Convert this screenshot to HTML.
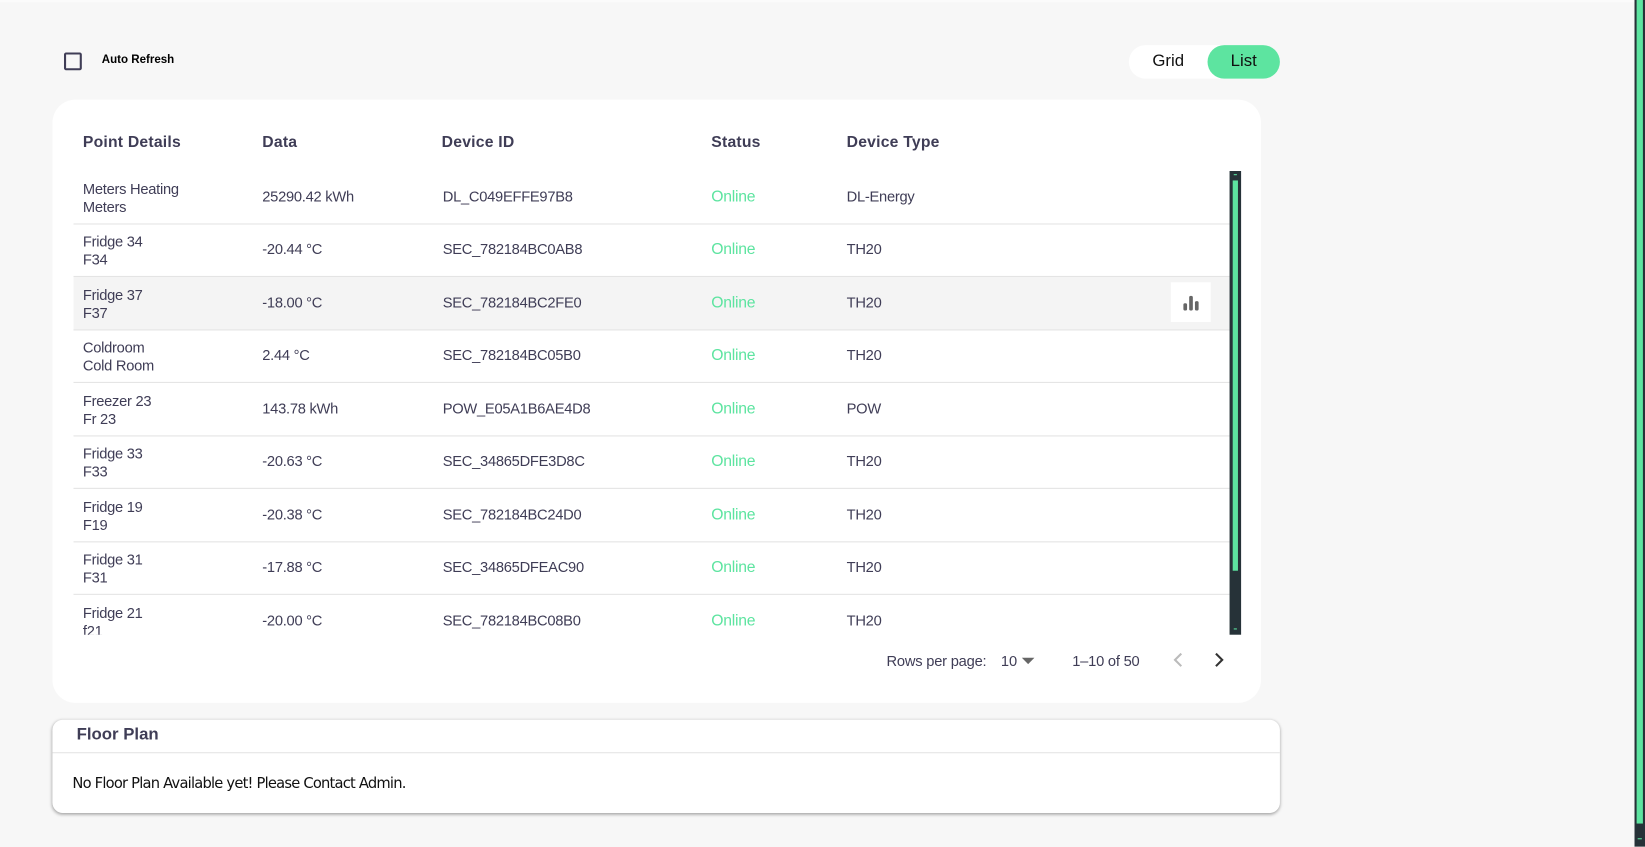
<!DOCTYPE html>
<html><head><meta charset="utf-8"><style>
*{box-sizing:border-box;margin:0;padding:0}
html,body{width:1645px;height:846px;overflow:hidden;background:#f7f7f7}
#w{position:absolute;left:0;top:0;width:1568px;height:807px;transform:scale(1.04911);transform-origin:0 0;font-family:"Liberation Sans",sans-serif;color:#3f3d56}
.abs{position:absolute}
.cb{left:61px;top:50px;width:17px;height:17px;border:2px solid #3f3d56;border-radius:2px}
.ar{left:97px;top:51px;font-size:11px;font-weight:bold;color:#000}
.tog{left:1076px;top:43px;width:144px;height:32px;background:#fff;border-radius:16px}
.tog .g{position:absolute;left:0;width:75px;top:0;height:32px;line-height:32px;text-align:center;font-size:16px;color:#111}
.tog .l{position:absolute;left:75px;width:69px;top:0;height:32px;line-height:32px;text-align:center;font-size:16px;color:#111;background:#5de4a0;border-radius:16px}
.card{left:50px;top:95px;width:1152px;height:575px;background:#fff;border-radius:22px}
.th{top:127px;font-size:15px;font-weight:bold;color:#3f3d56;letter-spacing:0.2px}
.row{position:absolute;left:70px;width:1102px;height:51px;border-bottom:1px solid #e3e3e3;font-size:14px;color:#3f3d56;letter-spacing:-0.25px}
.row div{position:absolute}
.c1{left:9px;top:9px;line-height:17px}
.c2{left:180px;top:16px}
.c3{left:352px;top:16px}
.c4{left:608px;top:16px;color:#5de4a0;font-size:15px}
.c5{left:737px;top:16px}
.sb{left:1172px;top:163px;width:11px;height:442px;background:#263238}
.fp{left:50px;top:686px;width:1170px;height:89px;background:#fff;border-radius:10px;box-shadow:0 1px 3px rgba(0,0,0,.35)}
</style></head><body><div id="w">
<div class="abs" style="left:0;top:0;width:1568px;height:2px;background:#fbfbfb"></div>
<div class="abs cb"></div>
<div class="abs ar">Auto Refresh</div>
<div class="abs tog"><div class="g">Grid</div><div class="l">List</div></div>
<div class="abs card"></div>
<div class="abs th" style="left:79px">Point Details</div>
<div class="abs th" style="left:250px">Data</div>
<div class="abs th" style="left:421px">Device ID</div>
<div class="abs th" style="left:678px">Status</div>
<div class="abs th" style="left:807px">Device Type</div>
<div class="abs" style="left:70px;top:163px;width:1102px;height:442px;overflow:hidden">
<div class="row" style="top:0;left:0"><div class="c1">Meters Heating<br>Meters</div><div class="c2">25290.42 kWh</div><div class="c3">DL_C049EFFE97B8</div><div class="c4">Online</div><div class="c5">DL-Energy</div></div>
<div class="row" style="top:50px;left:0"><div class="c1">Fridge 34<br>F34</div><div class="c2">-20.44 °C</div><div class="c3">SEC_782184BC0AB8</div><div class="c4">Online</div><div class="c5">TH20</div></div>
<div class="row" style="top:101px;left:0;background:#f4f4f4"><div class="c1">Fridge 37<br>F37</div><div class="c2">-18.00 °C</div><div class="c3">SEC_782184BC2FE0</div><div class="c4">Online</div><div class="c5">TH20</div>
<div style="left:1046px;top:5px;width:38px;height:38px;background:#fff"><svg width="38" height="38"><g fill="#666"><rect x="12" y="20" width="3.5" height="7" rx="1.5"/><rect x="17.5" y="13" width="3.5" height="14" rx="1.5"/><rect x="23" y="18" width="3.5" height="9" rx="1.5"/></g></svg></div></div>
<div class="row" style="top:151px;left:0"><div class="c1">Coldroom<br>Cold Room</div><div class="c2">2.44 °C</div><div class="c3">SEC_782184BC05B0</div><div class="c4">Online</div><div class="c5">TH20</div></div>
<div class="row" style="top:202px;left:0"><div class="c1">Freezer 23<br>Fr 23</div><div class="c2">143.78 kWh</div><div class="c3">POW_E05A1B6AE4D8</div><div class="c4">Online</div><div class="c5">POW</div></div>
<div class="row" style="top:252px;left:0"><div class="c1">Fridge 33<br>F33</div><div class="c2">-20.63 °C</div><div class="c3">SEC_34865DFE3D8C</div><div class="c4">Online</div><div class="c5">TH20</div></div>
<div class="row" style="top:303px;left:0"><div class="c1">Fridge 19<br>F19</div><div class="c2">-20.38 °C</div><div class="c3">SEC_782184BC24D0</div><div class="c4">Online</div><div class="c5">TH20</div></div>
<div class="row" style="top:353px;left:0"><div class="c1">Fridge 31<br>F31</div><div class="c2">-17.88 °C</div><div class="c3">SEC_34865DFEAC90</div><div class="c4">Online</div><div class="c5">TH20</div></div>
<div class="row" style="top:404px;left:0"><div class="c1">Fridge 21<br>f21</div><div class="c2">-20.00 °C</div><div class="c3">SEC_782184BC08B0</div><div class="c4">Online</div><div class="c5">TH20</div></div>
</div>
<div class="abs sb"><div class="abs" style="left:3px;top:9px;width:5px;height:372px;background:#5de4a0"></div><div class="abs" style="left:4px;top:3px;width:3px;height:1px;background:#5de4a0"></div><div class="abs" style="left:4px;top:436px;width:3px;height:1px;background:#5de4a0"></div></div>
<div class="abs" style="left:845px;top:622px;font-size:14px;color:#3f3d56;letter-spacing:-0.2px">Rows per page:</div>
<div class="abs" style="left:954px;top:622px;font-size:14px;color:#3f3d56">10</div>
<svg class="abs" style="left:974px;top:626px" width="12" height="8"><path d="M0 1h12L6 7z" fill="#666"/></svg>
<div class="abs" style="left:1022px;top:622px;font-size:14px;color:#3f3d56;letter-spacing:-0.2px">1–10 of 50</div>
<svg class="abs" style="left:1116px;top:621px" width="16" height="16"><path d="M10 2L4 8l6 6" stroke="#bbb" stroke-width="2" fill="none"/></svg>
<svg class="abs" style="left:1154px;top:621px" width="16" height="16"><path d="M5 2l6 6-6 6" stroke="#333" stroke-width="2" fill="none"/></svg>
<div class="abs fp"><div class="abs" style="left:0;top:31px;width:1170px;height:1px;background:#e3e3e3"></div>
<div class="abs" style="left:23px;top:6px;font-size:16px;font-weight:bold;color:#3f3d56">Floor Plan</div>
<div class="abs" style="left:19px;top:53px;font-size:14px;color:#111;font-family:'DejaVu Sans','Liberation Sans',sans-serif;letter-spacing:-0.75px">No Floor Plan Available yet! Please Contact Admin.</div></div>
<div class="abs" style="left:1558px;top:0;width:10px;height:807px;background:#263238"><div class="abs" style="left:2px;top:0;width:6px;height:785px;background:#5de4a0"></div><div class="abs" style="left:3px;top:799px;width:4px;height:1px;background:#5de4a0"></div></div>
</div></body></html>
